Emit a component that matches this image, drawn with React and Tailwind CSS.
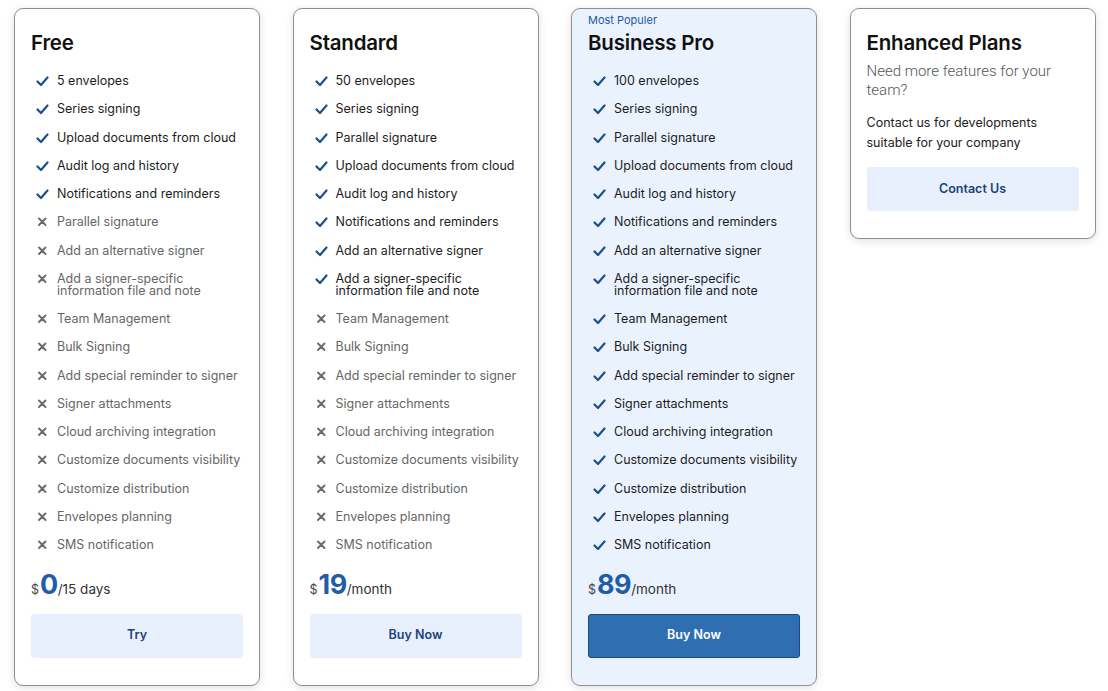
import { useState } from 'react'

const features = [
  'Series signing',
  'Parallel signature',
  'Upload documents from cloud',
  'Audit log and history',
  'Notifications and reminders',
  'Add an alternative signer',
  'Add a signer-specific information file and note',
  'Team Management',
  'Bulk Signing',
  'Add special reminder to signer',
  'Signer attachments',
  'Cloud archiving integration',
  'Customize documents visibility',
  'Customize distribution',
  'Envelopes planning',
  'SMS notification',
]

const freeOrder = [
  ['5 envelopes', true],
  ['Series signing', true],
  ['Upload documents from cloud', true],
  ['Audit log and history', true],
  ['Notifications and reminders', true],
  ['Parallel signature', false],
  ['Add an alternative signer', false],
  ['Add a signer-specific information file and note', false],
  ['Team Management', false],
  ['Bulk Signing', false],
  ['Add special reminder to signer', false],
  ['Signer attachments', false],
  ['Cloud archiving integration', false],
  ['Customize documents visibility', false],
  ['Customize distribution', false],
  ['Envelopes planning', false],
  ['SMS notification', false],
]

const standardOrder = [['50 envelopes', true], ...features.map((f, i) => [f, i < 7])]
const proOrder = [['100 envelopes', true], ...features.map((f) => [f, true])]

const plans = [
  { name: 'Free', items: freeOrder, price: '0', period: '/15 days', cta: 'Try' },
  { name: 'Standard', items: standardOrder, price: '19', period: '/month', cta: 'Buy Now' },
  { name: 'Business Pro', items: proOrder, price: '89', period: '/month', cta: 'Buy Now', popular: true },
]

const font = { fontFamily: 'Inter, "Noto Sans", sans-serif' }

function Check() {
  return (
    <svg width="13" height="11" viewBox="0 0 13 11" className="shrink-0 mt-[1px]">
      <path d="M1.5 5.5 L5 9 L11.5 1.5" fill="none" stroke="#1c4f8e" strokeWidth="2.2" strokeLinecap="round" strokeLinejoin="round" />
    </svg>
  )
}

function Cross() {
  return (
    <svg width="13" height="11" viewBox="0 0 13 11" className="shrink-0 mt-[1px]">
      <path d="M3 1.5 L9.5 8 M9.5 1.5 L3 8" fill="none" stroke="#6b6b6b" strokeWidth="1.9" strokeLinecap="round" />
    </svg>
  )
}

function PlanCard({ plan }) {
  const pro = plan.popular
  return (
    <div
      className={`w-[246px] shrink-0 rounded-[9px] border border-[#8f8f8f] shadow-[0_2px_8px_rgba(0,0,0,0.12)] px-4 pb-[27px] ${pro ? 'bg-[#eaf2fd] pt-[5px]' : 'bg-white pt-[22px]'}`}
    >
      {pro && <div className="text-[11px] leading-[12px] text-[#1f5a9c] mb-[5px]">Most Populer</div>}
      <h2 className="text-[20.5px] leading-[24px] font-semibold text-[#111] tracking-[-0.2px]">{plan.name}</h2>
      <ul className="mt-[20px] flex flex-col gap-[16.25px] ml-[5px]">
        {plan.items.map(([label, on]) => (
          <li key={label} className="flex items-start gap-[8px]">
            {on ? <Check /> : <Cross />}
            <span className={`block w-[186px] text-[12.5px] leading-[12px] ${on ? 'text-[#1d1d1d]' : 'text-[#666]'}`}>{label}</span>
          </li>
        ))}
      </ul>
      <div className="mt-[20px] flex items-baseline">
        <span className="text-[12.5px] text-[#444] mr-[1px]">$</span>
        <span className="text-[27px] leading-[28px] font-bold text-[#1f5ea6] tracking-[-0.5px]">{plan.price}</span>
        <span className="text-[13.5px] text-[#333]">{plan.period}</span>
      </div>
      <button
        className={`mt-[14px] w-full h-[44px] rounded-[3px] text-[12.5px] font-semibold ${pro ? 'bg-[#2f6fb1] border border-[#1c4b84] text-white' : 'bg-[#e8f0fd] text-[#1d4379]'}`}
      >
        {plan.cta}
      </button>
    </div>
  )
}

export default function App() {
  const [hover] = useState(null)
  return (
    <div className="min-h-[691px] bg-white flex items-start gap-[32.5px] pl-[14px] pt-[8px]" style={font} data-h={hover}>
      {plans.map((p) => (
        <PlanCard key={p.name} plan={p} />
      ))}
      <div className="w-[246px] shrink-0 rounded-[9px] border border-[#8f8f8f] shadow-[0_2px_8px_rgba(0,0,0,0.12)] bg-white px-4 pt-[22px] pb-[27px]">
        <h2 className="text-[20.5px] leading-[24px] font-semibold text-[#111] tracking-[-0.2px]">Enhanced Plans</h2>
        <p className="mt-[7px] text-[15px] leading-[19px] font-light text-[#555]" style={{ fontFamily: 'Roboto, sans-serif' }}>
          Need more features for your team?
        </p>
        <p className="mt-[13px] text-[12.5px] leading-[20px] text-[#222] w-[190px]">Contact us for developments suitable for your company</p>
        <button className="mt-[14px] w-full h-[44px] rounded-[3px] text-[12.5px] font-semibold bg-[#e8f0fd] text-[#1d4379]">Contact Us</button>
      </div>
    </div>
  )
}
